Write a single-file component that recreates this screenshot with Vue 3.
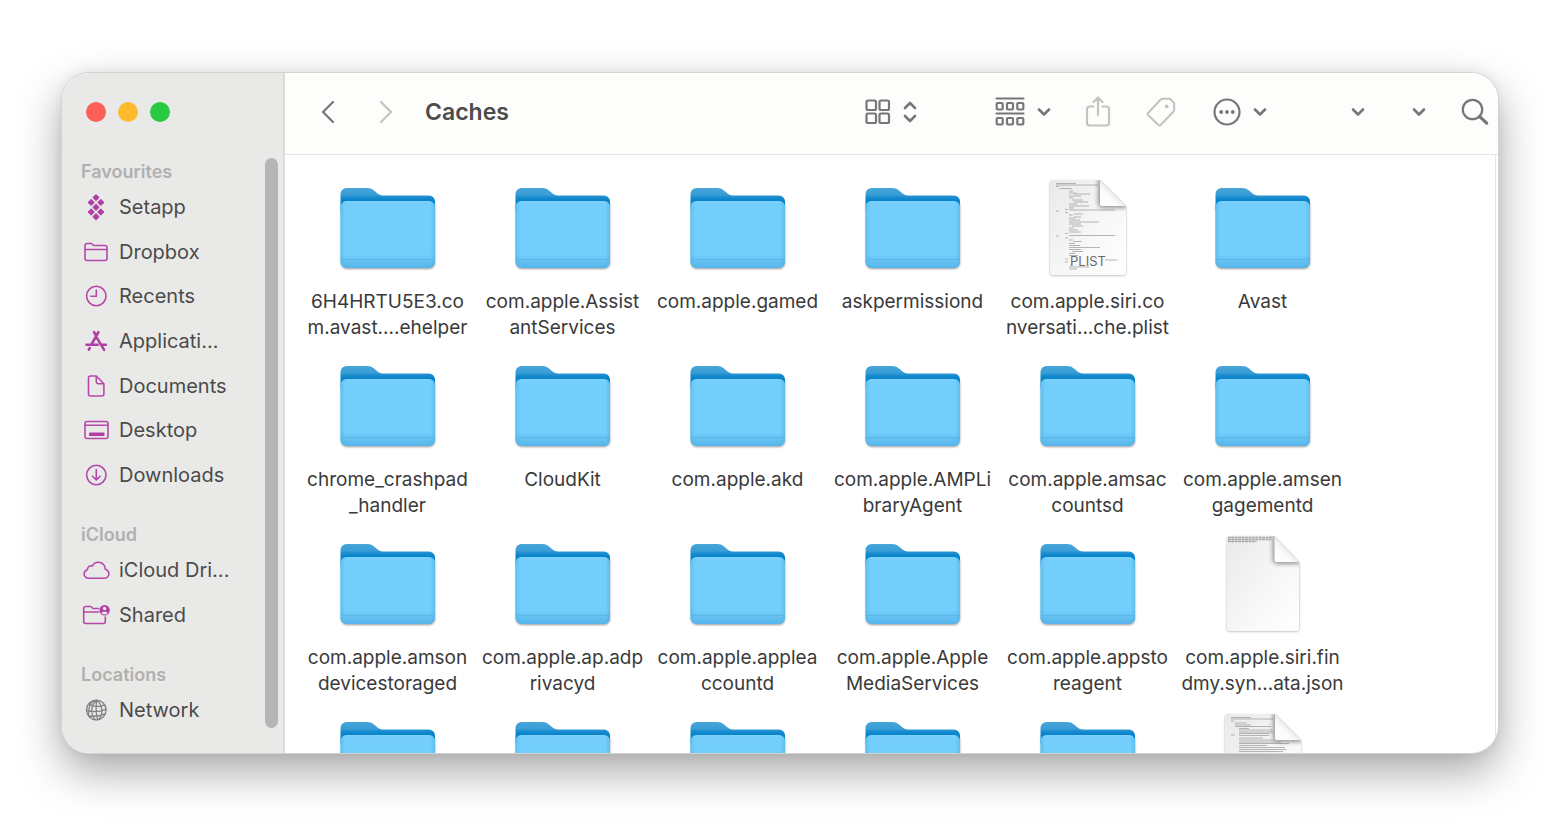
<script setup>
import { ref } from 'vue'

const current = ref('Caches')

const sections = [
  {
    title: 'Favourites',
    rows: 'rows-7',
    items: [
      { name: 'Setapp', icon: 'setapp' },
      { name: 'Dropbox', icon: 'folder' },
      { name: 'Recents', icon: 'clock' },
      { name: 'Applicati...', icon: 'apps' },
      { name: 'Documents', icon: 'doc' },
      { name: 'Desktop', icon: 'desktop' },
      { name: 'Downloads', icon: 'download' },
    ],
  },
  {
    title: 'iCloud',
    rows: 'rows-2',
    items: [
      { name: 'iCloud Dri...', icon: 'cloud' },
      { name: 'Shared', icon: 'shared' },
    ],
  },
  {
    title: 'Locations',
    rows: 'rows-1',
    items: [{ name: 'Network', icon: 'globe' }],
  },
]

const files = [
  { type: 'folder', lines: ['6H4HRTU5E3.co', 'm.avast....ehelper'] },
  { type: 'folder', lines: ['com.apple.Assist', 'antServices'] },
  { type: 'folder', lines: ['com.apple.gamed'] },
  { type: 'folder', lines: ['askpermissiond'] },
  { type: 'plist', lines: ['com.apple.siri.co', 'nversati...che.plist'] },
  { type: 'folder', lines: ['Avast'] },
  { type: 'folder', lines: ['chrome_crashpad', '_handler'] },
  { type: 'folder', lines: ['CloudKit'] },
  { type: 'folder', lines: ['com.apple.akd'] },
  { type: 'folder', lines: ['com.apple.AMPLi', 'braryAgent'] },
  { type: 'folder', lines: ['com.apple.amsac', 'countsd'] },
  { type: 'folder', lines: ['com.apple.amsen', 'gagementd'] },
  { type: 'folder', lines: ['com.apple.amson', 'devicestoraged'] },
  { type: 'folder', lines: ['com.apple.ap.adp', 'rivacyd'] },
  { type: 'folder', lines: ['com.apple.applea', 'ccountd'] },
  { type: 'folder', lines: ['com.apple.Apple', 'MediaServices'] },
  { type: 'folder', lines: ['com.apple.appsto', 'reagent'] },
  { type: 'json', lines: ['com.apple.siri.fin', 'dmy.syn...ata.json'] },
  { type: 'folder', lines: [] },
  { type: 'folder', lines: [] },
  { type: 'folder', lines: [] },
  { type: 'folder', lines: [] },
  { type: 'folder', lines: [] },
  { type: 'code', lines: [] },
]
</script>

<template>
  <div class="desktop">
    <svg class="defs" aria-hidden="true">
      <defs>
        <linearGradient id="back" x1="0" y1="0" x2="0" y2="1">
          <stop offset="0" stop-color="#47a6da" />
          <stop offset="0.3" stop-color="#3a9dd6" />
          <stop offset="0.42" stop-color="#1c8dce" />
          <stop offset="0.55" stop-color="#0784cb" />
          <stop offset="1" stop-color="#0784cb" />
        </linearGradient>
        <linearGradient id="front" x1="0" y1="0" x2="0" y2="1">
          <stop offset="0" stop-color="#80d2fb" />
          <stop offset="0.04" stop-color="#73cefb" />
          <stop offset="0.8" stop-color="#73cefb" />
          <stop offset="0.87" stop-color="#69c4f3" />
          <stop offset="1" stop-color="#55b5ea" />
        </linearGradient>
        <linearGradient id="edge" x1="0" y1="0" x2="1" y2="0">
          <stop offset="0" stop-color="#4fb4ea" stop-opacity="0.6" />
          <stop offset="0.05" stop-color="#4fb4ea" stop-opacity="0" />
          <stop offset="0.95" stop-color="#4fb4ea" stop-opacity="0" />
          <stop offset="1" stop-color="#4fb4ea" stop-opacity="0.6" />
        </linearGradient>
        <linearGradient id="page" x1="0" y1="0" x2="1" y2="1">
          <stop offset="0" stop-color="#e9e9e9" />
          <stop offset="0.6" stop-color="#f8f8f8" />
          <stop offset="1" stop-color="#ffffff" />
        </linearGradient>
        <linearGradient id="curl" x1="0" y1="1" x2="0.6" y2="0.4">
          <stop offset="0" stop-color="#ffffff" />
          <stop offset="0.6" stop-color="#fbfbfb" />
          <stop offset="1" stop-color="#dedede" />
        </linearGradient>
        <filter id="soft" x="-20%" y="-20%" width="140%" height="140%">
          <feGaussianBlur stdDeviation="1.2" />
        </filter>
        <filter id="softer" x="-50%" y="-50%" width="200%" height="200%">
          <feGaussianBlur stdDeviation="2.2" />
        </filter>
        <clipPath id="sheet">
          <path d="M13 0H60L86 26V92a3 3 0 0 1-3 3H13a3 3 0 0 1-3-3V3a3 3 0 0 1 3-3Z" />
        </clipPath>
      </defs>
    </svg>

    <div class="window">
      <aside class="sidebar">
        <div class="nav-col">
          <div class="lights">
            <button class="light red" aria-label="Close"></button>
            <button class="light yellow" aria-label="Minimise"></button>
            <button class="light green" aria-label="Zoom"></button>
          </div>
          <nav>
            <section v-for="s in sections" :key="s.title" class="group">
              <h2>{{ s.title }}</h2>
              <ul :class="s.rows">
                <li v-for="item in s.items" :key="item.name">
                  <a href="#" class="place">
                    <svg class="place-icon" :class="{ gray: item.icon === 'globe' }" viewBox="0 0 28 28">
                      <g v-if="item.icon === 'setapp'" class="gems">
                        <path d="M14 1.900l2.700 2.700L14 7.300l-2.700-2.700ZM9.200 6.700l2.700 2.700-2.700 2.700-2.700-2.700ZM18.800 6.700l2.700 2.700-2.700 2.700-2.700-2.700ZM14 11.500l2.700 2.700-2.700 2.700-2.700-2.700ZM9.200 16.300l2.700 2.700-2.700 2.700-2.700-2.700ZM18.800 16.300l2.700 2.700-2.700 2.700-2.700-2.700ZM14 21.100l2.700 2.700-2.700 2.700-2.700-2.700Z" />
                      </g>
                      <g v-else-if="item.icon === 'folder'">
                        <path d="M3 20.500V7.500a2 2 0 0 1 2-2h4.500l2.200 2H23a2 2 0 0 1 2 2v11a2 2 0 0 1-2 2H5a2 2 0 0 1-2-2ZM3 11.500h22" />
                      </g>
                      <g v-else-if="item.icon === 'clock'">
                        <circle cx="14.300" cy="14" r="9.700" />
                        <path d="M14.300 8v6.300H8.800" />
                      </g>
                      <g v-else-if="item.icon === 'apps'" class="thick">
                        <path d="M16.400 5.200L9.800 17M12 5.200l1.700 2.900M4.500 17.700h11.200M20.200 17.700h3.600M15.200 11.300l6.900 11.500M7.800 21l-1 1.700" />
                      </g>
                      <g v-else-if="item.icon === 'doc'">
                        <path d="M8.500 4h5.800l7.600 7.700V22a2 2 0 0 1-2 2H8.500a2 2 0 0 1-2-2V6a2 2 0 0 1 2-2ZM14.300 4v5.700a2 2 0 0 0 2 2h5.600" />
                      </g>
                      <g v-else-if="item.icon === 'desktop'">
                        <rect x="3" y="5.500" width="23" height="17" rx="2" />
                        <path d="M3 9.200h23" />
                        <rect class="solid" x="7" y="16.500" width="15.500" height="3.500" rx="1" />
                      </g>
                      <g v-else-if="item.icon === 'download'">
                        <circle cx="14.300" cy="14" r="9.700" />
                        <path d="M14.300 8.500v10.300M10.500 15.200l3.800 3.800 3.800-3.800" />
                      </g>
                      <g v-else-if="item.icon === 'cloud'">
                        <path d="M7 22.300c-2.800 0-4.900-1.900-4.900-4.400 0-2.200 1.400-3.700 3.300-4.200 0-3 2.800-4.600 5-3.700 1.200-2.400 3.400-3.700 6-3.700 4 0 6.800 3 6.900 6.900 2.200.7 3.600 2.300 3.600 4.500 0 2.700-2.100 4.600-4.900 4.600Z" />
                      </g>
                      <g v-else-if="item.icon === 'shared'">
                        <path d="M16.500 7.500h-5.600l-2-2H3.700a2 2 0 0 0-2 2v13a2 2 0 0 0 2 2h17.600a2 2 0 0 0 2-2V16M1.700 11h15" />
                        <circle class="solid" cx="22.600" cy="9.200" r="5.200" />
                        <circle class="hole" cx="22.600" cy="7.500" r="1.700" />
                        <path class="hole" d="M19.600 12.200c.6-1.900 5.400-1.900 6 0-1.500 1.600-4.500 1.600-6 0Z" />
                      </g>
                      <g v-else class="thin">
                        <circle cx="14.300" cy="14" r="9.800" />
                        <path d="M14.800 4.200c-6 5-7 13-1.500 19.600M14.800 4.200c6 5 6.500 13.500 2 19.200M14.800 4.200c-1 6-1 13 .8 19.600M6.500 8.200c5 2.600 11.500 2.600 16.200.6M4.500 14.500c6 1.600 13.500 1.400 19.500-1.200M6.500 20c5 .6 11.500 0 16.500-2.200M13 4.300C8.500 6 6.500 9.500 6.600 20" />
                      </g>
                    </svg>
                    <span>{{ item.name }}</span>
                  </a>
                </li>
              </ul>
            </section>
          </nav>
        </div>
        <div class="scrollbar"></div>
      </aside>

      <main class="content">
        <header class="toolbar">
          <button class="tool back" aria-label="Back">
            <svg width="14" height="24" viewBox="0 0 14 24"><path d="M12 2L2 12l10 10" /></svg>
          </button>
          <button class="tool forward pale" aria-label="Forward">
            <svg width="14" height="24" viewBox="0 0 14 24"><path d="M2 2l10 10L2 22" /></svg>
          </button>
          <h1>{{ current }}</h1>

          <button class="tool view" aria-label="View as icons">
            <svg width="26" height="26" viewBox="0 0 26 26">
              <rect x="1.500" y="1.500" width="9.500" height="9.500" rx="1.500" />
              <rect x="14.500" y="1.500" width="9.500" height="9.500" rx="1.500" />
              <rect x="1.500" y="14.500" width="9.500" height="9.500" rx="1.500" />
              <rect x="14.500" y="14.500" width="9.500" height="9.500" rx="1.500" />
            </svg>
            <svg class="bold" width="14" height="24" viewBox="0 0 14 24"><path d="M2 8l5-5 5 5M2 16l5 5 5-5" /></svg>
          </button>
          <button class="tool arrange" aria-label="Group items">
            <svg width="30" height="30" viewBox="0 0 30 30">
              <path d="M1.500 1.500h27M1.500 16.500h27" />
              <rect x="1.700" y="6" width="6" height="6.500" rx="1" />
              <rect x="12" y="6" width="6" height="6.500" rx="1" />
              <rect x="22.300" y="6" width="6" height="6.500" rx="1" />
              <rect x="1.700" y="21" width="6" height="6.500" rx="1" />
              <rect x="12" y="21" width="6" height="6.500" rx="1" />
              <rect x="22.300" y="21" width="6" height="6.500" rx="1" />
            </svg>
            <svg class="bold" width="14" height="10" viewBox="0 0 14 10"><path d="M2 2.500l5 5 5-5" /></svg>
          </button>
          <button class="tool share pale" aria-label="Share">
            <svg width="26" height="32" viewBox="0 0 26 32">
              <path d="M8.500 10.500H4.500a2.500 2.500 0 0 0-2.500 2.500v14a2.500 2.500 0 0 0 2.500 2.500h17a2.500 2.500 0 0 0 2.500-2.500V13a2.500 2.500 0 0 0-2.500-2.500h-4M13 19V1.500M8.500 6L13 1.500 17.500 6" />
            </svg>
          </button>
          <button class="tool tag pale" aria-label="Tags">
            <svg width="32" height="32" viewBox="-1 -1 34 34">
              <path d="M18 2h7.500L30 6.500V13a4 4 0 0 1-1.200 3L15.800 29.500a2 2 0 0 1-2.800 0L2.500 19.500a2 2 0 0 1 0-2.800L15.200 3.200A4 4 0 0 1 18 2Z" />
              <circle class="dot" cx="22" cy="10" r="2" />
            </svg>
          </button>
          <button class="tool more" aria-label="More actions">
            <svg width="28" height="28" viewBox="0 0 28 28">
              <circle cx="14" cy="14" r="12.500" />
              <circle class="dot" cx="8.200" cy="14" r="1.900" />
              <circle class="dot" cx="14" cy="14" r="1.900" />
              <circle class="dot" cx="19.800" cy="14" r="1.900" />
            </svg>
            <svg class="bold" width="14" height="10" viewBox="0 0 14 10"><path d="M2 2.500l5 5 5-5" /></svg>
          </button>
          <button class="tool menu-a" aria-label="Menu">
            <svg class="bold" width="14" height="10" viewBox="0 0 14 10"><path d="M2 2.500l5 5 5-5" /></svg>
          </button>
          <button class="tool menu-b" aria-label="Menu">
            <svg class="bold" width="14" height="10" viewBox="0 0 14 10"><path d="M2 2.500l5 5 5-5" /></svg>
          </button>
          <button class="tool search" aria-label="Search">
            <svg width="28" height="28" viewBox="0 0 28 28">
              <circle cx="11.500" cy="11.500" r="9.700" />
              <path class="handle" d="M18.700 18.700l7 6.500" />
            </svg>
          </button>
        </header>

        <div class="files">
          <ul class="file-grid">
            <li v-for="(f, i) in files" :key="i" class="file">
              <svg v-if="f.type === 'folder'" class="file-icon" viewBox="0 0 96 96">
                <rect x="1" y="20" width="94" height="69" rx="6" fill="#555" opacity="0.6" filter="url(#soft)" />
                <path d="M0.500 30V14a6 6 0 0 1 6-6H27c3 0 5 .8 7 2.500l3 2.500c1.500 1.500 3.500 2.500 6 2.500H89a6 6 0 0 1 6 6V30Z" fill="url(#back)" />
                <path d="M0.500 27a6 6 0 0 1 6-6H89a6 6 0 0 1 6 6V82a6 6 0 0 1-6 6H6.500a6 6 0 0 1-6-6Z" fill="url(#front)" />
                <path d="M0.500 27a6 6 0 0 1 6-6H89a6 6 0 0 1 6 6V82a6 6 0 0 1-6 6H6.500a6 6 0 0 1-6-6Z" fill="url(#edge)" />
                <path d="M1 79.500H95" stroke="#53b2e6" stroke-width="0.700" />
              </svg>
              <svg v-else class="file-icon" viewBox="0 0 96 96">
                <g :transform="f.type === 'json' ? 'translate(2.5 0) scale(0.95 1)' : null">
                  <path d="M13 1H60L86 27V92.500a3 3 0 0 1-3 3H13a3 3 0 0 1-3-3V4a3 3 0 0 1 3-3Z" fill="#777" opacity="0.6" filter="url(#soft)" />
                  <g clip-path="url(#sheet)">
                    <rect x="10" width="76" height="95" fill="url(#page)" />
                    <path v-if="f.type === 'plist'" class="code" d="M16 3.500h20M16 5h42M16 6.500h3M20 8.500h12M29 11h4M29 13h7M34 14h16M29 16h12M29 18h4M32 20h11M34 22h14M29 24h8M29 26h20M29 28h5M25 29.500h3M29 30h46M16 31h3M25 32.500h3M29 35h4M34 34h9M29 38h6M34 37h7M29 40h11M29 42h30M29 44h12M32 46h11M29 48h5M29 50h9M29 52h12M25 53.500h3M29 55.500h46M16 56h3M25 58h3M29 60h4M33 61.500h9M29 63.500h6M29 65.500h11M29 67.500h31M29 69.500h12M32 71.500h11M29 73.500h6M29 75.500h9M25 79h3M65 80h12M25 82h3M29 87h20M29 89h8" />
                    <path v-else-if="f.type === 'code'" class="code" d="M16 3.500h20M16 5h42M16 7h3M20 9h12M20 11h16M20 12.500h36M24 14.500h10M24 16h33M24 18h34M24 19.500h31M16 21h4M24 21.500h30M24 24h24M24 26h36M24 28h42M24 29.500h50M24 31.500h28M24 33.500h46M24 35.500h47M24 37.500h44M24 39.500h45" />
                    <path v-else class="header-code" d="M11 1.500h46M11 3.500h45M11 5.500h30" />
                    <path d="M58 -2V23a5 5 0 0 0 5 5h26L60-2Z" fill="#555" opacity="0.6" filter="url(#softer)" />
                  </g>
                  <path d="M60 0L86 26H62a2 2 0 0 1-2-2Z" fill="url(#curl)" />
                </g>
                <text v-if="f.type === 'plist'" x="48" y="86" class="kind">PLIST</text>
              </svg>
              <p class="name"><span v-for="l in f.lines" :key="l">{{ l }}</span></p>
            </li>
          </ul>
        </div>
      </main>
    </div>
  </div>
</template>

<style>
body {
  margin: 0;
  background: #fff;
}
</style>

<style scoped>
* {
  box-sizing: border-box;
}

.desktop {
  display: flex;
  height: 100vh;
  padding: 72px 61px 80px;
  overflow: hidden;
  font-family: Inter, "Liberation Sans", sans-serif;
}

.defs {
  position: absolute;
  width: 0;
  height: 0;
}

.window {
  flex: 1;
  display: flex;
  min-width: 0;
  overflow: hidden;
  border: 1px solid #d2d2d1;
  border-radius: 28px;
  background: #fff;
  box-shadow: 0 18px 44px rgba(0, 0, 0, 0.34), 0 0 12px rgba(0, 0, 0, 0.06);
}

.sidebar {
  display: flex;
  justify-content: space-between;
  width: 223px;
  flex-shrink: 0;
  padding-right: 5px;
  border-right: 2px solid #dcdcdb;
  background: #e9e9e8;
}

.lights {
  display: flex;
  gap: 12px;
  padding: 29px 0 36px 24px;
}

.light {
  width: 20px;
  height: 20px;
  padding: 0;
  border: 0;
  border-radius: 50%;
}

.red {
  background: #fe5f58;
}

.yellow {
  background: #febb2e;
}

.green {
  background: #29c940;
}

nav {
  display: flex;
  flex-direction: column;
  gap: 24px;
}

h2 {
  margin: 0;
  padding-left: 19px;
  font-size: 18px;
  font-weight: 600;
  line-height: 27px;
  color: #b0b0af;
}

ul {
  margin: 0;
  padding: 0;
  list-style: none;
}

.group ul {
  display: grid;
  grid-auto-rows: 1fr;
}

.rows-7 {
  height: 312px;
}

.rows-2 {
  height: 89px;
}

.rows-1 {
  height: 44px;
}

.place {
  display: flex;
  align-items: center;
  gap: 9px;
  height: 100%;
  padding-left: 20px;
  font-size: 20px;
  color: #4b4b4b;
  text-decoration: none;
  white-space: nowrap;
}

.place-icon {
  width: 28px;
  height: 28px;
  fill: none;
  stroke: #b648ab;
  stroke-width: 1.6;
  stroke-linecap: round;
  stroke-linejoin: round;
}

.place-icon.gray {
  stroke: #828282;
}

.place-icon .solid {
  fill: #b040a5;
  stroke: none;
}

.place-icon .gems {
  fill: #b040a5;
  stroke: #b040a5;
  stroke-width: 1.4;
}

.place-icon .hole {
  fill: #e9e9e8;
  stroke: none;
}

.place-icon .thick {
  stroke-width: 2.6;
  stroke: #b040a5;
}

.place-icon .thin {
  stroke-width: 1.3;
}

.scrollbar {
  width: 13px;
  margin: 85px 0 25px;
  border-radius: 7px;
  background: #b5b5b5;
}

.content {
  flex: 1;
  display: flex;
  flex-direction: column;
  min-width: 0;
}

.toolbar {
  display: flex;
  align-items: center;
  flex-shrink: 0;
  height: 82px;
  padding: 0 9px 4px 36px;
  border-bottom: 1px solid #e4e4e3;
  background: #fdfdfb;
}

.tool {
  display: flex;
  align-items: center;
  flex-shrink: 0;
  padding: 0;
  border: 0;
  background: none;
  color: #777;
}

.tool svg {
  fill: none;
  stroke: currentColor;
  stroke-width: 2.2;
  stroke-linecap: round;
  stroke-linejoin: round;
}

.tool svg.bold {
  stroke-width: 2.6;
}

.tool .dot {
  fill: currentColor;
  stroke: none;
}

.tool .handle {
  stroke-width: 3.2;
}

.tool.pale {
  color: #c3c3c2;
}

.forward {
  margin-left: 44px;
}

h1 {
  margin: 0 auto 0 32px;
  font-size: 23px;
  font-weight: 600;
  line-height: 30px;
  color: #4c4c4c;
}

.view {
  gap: 12px;
  margin-right: 78px;
}

.arrange {
  gap: 12px;
  margin-right: 34px;
}

.share {
  margin-right: 34px;
}

.tag {
  margin-right: 36px;
}

.more {
  gap: 12px;
  margin-right: 84px;
}

.menu-a {
  margin-right: 47px;
}

.menu-b {
  margin-right: 35px;
}

.files {
  flex: 1;
  min-height: 0;
  overflow: hidden;
  margin-right: 2px;
  padding: 25px 0 0 15px;
  border-right: 1px solid #e4e4e4;
}

.file-grid {
  display: grid;
  grid-template-columns: repeat(auto-fill, 175px);
  grid-auto-rows: 160px;
  row-gap: 18px;
}

.file {
  display: flex;
  flex-direction: column;
  align-items: center;
  gap: 13px;
}

.file-icon {
  width: 96px;
  height: 96px;
  flex-shrink: 0;
  overflow: visible;
}

.code {
  stroke: #a2a2a2;
  stroke-width: 0.8;
}

.header-code {
  stroke: #a8a8a8;
  stroke-width: 1.5;
  stroke-dasharray: 3 0.6;
}

.kind {
  font-size: 13px;
  text-anchor: middle;
  fill: #6a6a6a;
}

.name {
  display: flex;
  flex-direction: column;
  align-items: center;
  margin: 0;
  font-size: 19px;
  line-height: 26px;
  color: #3a3a3a;
  white-space: nowrap;
}
</style>
